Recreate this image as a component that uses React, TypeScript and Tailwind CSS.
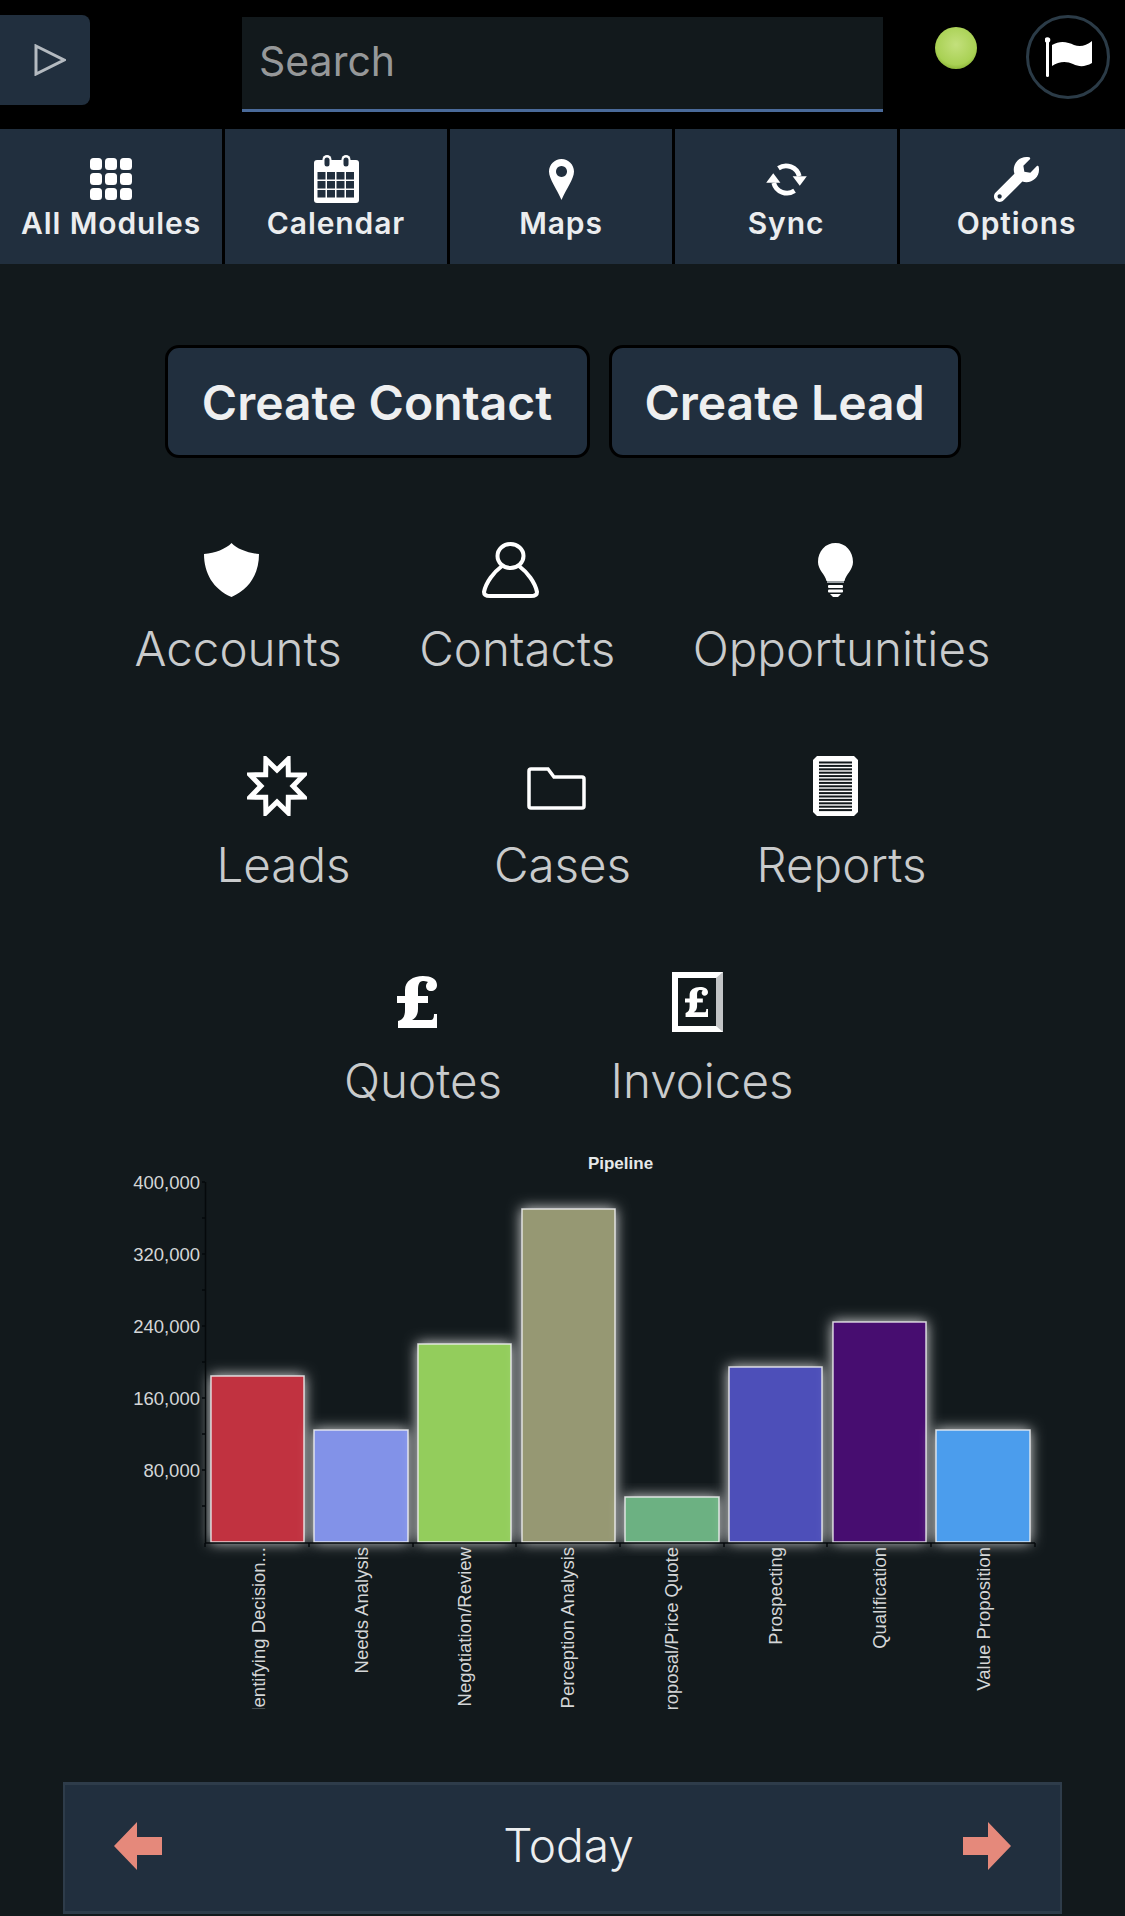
import React from 'react'
import { FaWrench } from 'react-icons/fa'

const bars = [
  { x: 211, w: 93, top: 1376, fill: '#c1323f', label: 'Identifying Decision...', lx: 258 },
  { x: 314, w: 94, top: 1430, fill: '#8292e8', label: 'Needs Analysis', lx: 361 },
  { x: 418, w: 93, top: 1344, fill: '#93cd5b', label: 'Negotiation/Review', lx: 464 },
  { x: 522, w: 93, top: 1209, fill: '#969873', label: 'Perception Analysis', lx: 567 },
  { x: 625, w: 94, top: 1497, fill: '#6cb182', label: 'Proposal/Price Quote', lx: 671 },
  { x: 729, w: 93, top: 1367, fill: '#4d50b9', label: 'Prospecting', lx: 775 },
  { x: 833, w: 93, top: 1322, fill: '#470b70', label: 'Qualification', lx: 879 },
  { x: 936, w: 94, top: 1430, fill: '#4b9ded', label: 'Value Proposition', lx: 983 },
]

const yLabels = [
  { y: 1182, t: '400,000' },
  { y: 1254, t: '320,000' },
  { y: 1326, t: '240,000' },
  { y: 1398, t: '160,000' },
  { y: 1470, t: '80,000' },
]

const starPoints = Array.from({ length: 16 }, (_, i) => {
  const r = i % 2 === 0 ? 29 : 16
  const a = ((i * 22.5 + 22.5 - 90) * Math.PI) / 180
  return `${30 + r * Math.cos(a)},${30 + r * Math.sin(a)}`
}).join(' ')

function GridIcon() {
  const cells = [0, 15, 30]
  return (
    <svg width="42" height="42" viewBox="0 0 42 42" fill="#fff">
      {cells.map((y) => cells.map((x) => <rect key={`${x}-${y}`} x={x} y={y} width="12" height="12" rx="3.5" />))}
    </svg>
  )
}

function CalendarIcon() {
  return (
    <svg width="45" height="48" viewBox="0 0 45 48">
      <rect x="0" y="5" width="45" height="43" rx="3" fill="#fff" />
      {[3.5, 13, 22.5, 32].map((x) =>
        [17, 26, 35].map((y) => <rect key={`${x}-${y}`} x={x} y={y} width="8" height="7.500" fill="#212f3e" />)
      )}
      {[13, 32].map((x) => (
        <g key={x}>
          <rect x={x - 4.5} y="0" width="9" height="14" rx="4.5" fill="#fff" />
          <rect x={x - 2.5} y="2.500" width="5" height="9" rx="2.500" fill="#212f3e" />
        </g>
      ))}
    </svg>
  )
}

function PinIcon() {
  return (
    <svg width="25" height="41" viewBox="0 0 25 41" fill="#fff" fillRule="evenodd">
      <path d="M12.5 0C19.4 0 25 5.6 25 12.5C25 20 17 30 12.5 41C8 30 0 20 0 12.5C0 5.6 5.6 0 12.5 0ZM12.5 7a5.5 5.5 0 1 0 .01 0Z" />
    </svg>
  )
}

function SyncIcon() {
  return (
    <svg width="41" height="35" viewBox="0 0 43 37" fill="none" stroke="#fff" strokeWidth="5">
      <path d="M13 6.5A14.5 14.5 0 0 1 35 15" />
      <path d="M30 30.5A14.5 14.5 0 0 1 8 22" />
      <path d="M28 15L43 15L35.5 25Z" fill="#fff" stroke="none" />
      <path d="M0 22L15 22L7.5 12Z" fill="#fff" stroke="none" />
    </svg>
  )
}

function ShieldIcon() {
  return (
    <svg width="55" height="54" viewBox="0 0 55 54" fill="#fff">
      <path d="M27.5 0C33 6 44 10 55 11C55 30 46 46 27.5 54C9 46 0 30 0 11C11 10 22 6 27.5 0Z" />
    </svg>
  )
}

function PersonIcon() {
  return (
    <svg width="57" height="56" viewBox="0 0 57 56" fill="none" stroke="#fff" strokeWidth="4">
      <ellipse cx="28.5" cy="14" rx="13" ry="12" />
      <path d="M20 24C12 30 4 40 2 50C2 53 5 54 8 54L49 54C52 54 55 53 55 50C53 40 45 30 37 24" />
    </svg>
  )
}

function BulbIcon() {
  return (
    <svg width="35" height="54" viewBox="0 0 35 54" fill="#fff">
      <path d="M17.5 0C27.5 0 35 8 35 19C35 27 28 31 26.5 38L8.5 38C7 31 0 27 0 19C0 8 7.5 0 17.5 0Z" />
      <rect x="9" y="38" width="17" height="2" fill="#9aa0a4" />
      <rect x="10" y="42" width="15" height="3" rx="1" />
      <rect x="10" y="46.500" width="15" height="3" rx="1" />
      <path d="M12 51L23 51L20 54L15 54Z" />
    </svg>
  )
}

function StarIcon() {
  return (
    <svg width="60" height="60" viewBox="0 0 60 60" fill="none" stroke="#fff" strokeWidth="5">
      <polygon points={starPoints} />
    </svg>
  )
}

function FolderIcon() {
  return (
    <svg className="mt-[4px]" width="59" height="43" viewBox="0 0 59 43" fill="none" stroke="#fff" strokeWidth="3.500">
      <path d="M2 4Q2 2 4 2L21 2L27 10L55 10Q57 10 57 12L57 39Q57 41 55 41L4 41Q2 41 2 39Z" />
    </svg>
  )
}

function ReportIcon() {
  const lines = Array.from({ length: 15 }, (_, i) => 5.5 + i * 3.4)
  return (
    <svg width="45" height="60" viewBox="0 0 45 60">
      <path d="M4 0L41 0L45 4L45 56L41 60L4 60L0 56L0 4Z" fill="#fff" />
      {lines.map((y) => <rect key={y} x="6" y={y} width="33" height="2" fill="#12191c" />)}
    </svg>
  )
}

function PoundIcon({ width, height }: { width: number; height: number }) {
  return (
    <svg width={width} height={height} viewBox="0 0 40 52" fill="#fff">
      <path d="M26 0C34 0 40 3 40 9C40 13 37 15 34 15C31 15 29 13 29 10C29 8 30 7 31 6C29 5 27 5 26 5C22 5 21 9 21 14L21 20L31 20L31 27L21 27L21 33C21 38 19 42 15 44L34 44C36 44 37 42 37 38L40 38L40 52L1 52L1 45C6 44 8 40 8 34L8 27L0 27L0 20L8 20L8 14C8 5 16 0 26 0Z" />
    </svg>
  )
}

function InvoiceIcon() {
  return (
    <div className="ml-[3px] flex h-[60px] w-[51px] items-center justify-center border-[6px] border-r-[7px] border-white border-r-[#c2c4c6]">
      <PoundIcon width={23} height={30} />
    </div>
  )
}

function NavItem({ icon, label, wide }: { icon: React.ReactNode; label: string; wide?: boolean }) {
  return (
    <div className={`flex h-full flex-col items-center bg-[#212f3e] ${wide ? 'flex-1 pl-[8px]' : 'w-[222px]'}`}>
      <div className="flex h-[76px] items-center justify-center pt-[24px]">{icon}</div>
      <span className="text-[30px] leading-[36px] font-semibold tracking-[0.9px] text-[#ebedef]">{label}</span>
    </div>
  )
}

function Tile({ icon, label }: { icon: React.ReactNode; label: string }) {
  return (
    <div className="min-w-[279px] px-[36px] text-center">
      <div className="flex h-[60px] items-center justify-center pr-[13px]">{icon}</div>
      <div className="mt-[22px] text-[47.5px] leading-[54px] font-light text-[#c9cbcc]">{label}</div>
    </div>
  )
}

function Chart() {
  return (
    <svg className="block" width="1125" height="620" viewBox="0 1140 1125 620" fontFamily="'Liberation Sans', Arial, sans-serif">
      <defs>
        <filter id="glow" x="-30%" y="-30%" width="160%" height="160%">
          <feDropShadow dx="0" dy="0" stdDeviation="7" floodColor="#fff" floodOpacity="0.85" />
        </filter>
        <clipPath id="labels">
          <rect x="200" y="1545" width="850" height="164" />
        </clipPath>
      </defs>
      <text x="620.500" y="1169" textAnchor="middle" fontSize="17" fontWeight="700" fill="#e6e8e9">Pipeline</text>
      {bars.map((b) => (
        <rect key={b.x} x={b.x} y={b.top} width={b.w} height={1542 - b.top} fill={b.fill} stroke="#eef0f1" strokeOpacity="0.85" strokeWidth="1.500" filter="url(#glow)" />
      ))}
      <g stroke="#05090b" strokeWidth="1.500">
        <line x1="205.500" y1="1182" x2="205.500" y2="1543" />
        <line x1="205" y1="1543" x2="1035" y2="1543" />
        {[1182, 1218, 1254, 1290, 1326, 1362, 1398, 1434, 1470, 1506].map((y) => <line key={y} x1="202" y1={y} x2="205" y2={y} />)}
        {[205, 309, 413, 516, 620, 724, 827, 931, 1035].map((x) => <line key={x} x1={x} y1="1543" x2={x} y2="1547" />)}
      </g>
      {yLabels.map((l) => (
        <text key={l.t} x="200" y={l.y + 6.500} textAnchor="end" fontSize="18.500" fill="#d4d6d7">{l.t}</text>
      ))}
      <g clipPath="url(#labels)">
        {bars.map((b) => (
          <text key={b.label} transform={`translate(${b.lx + 6.500} 1547) rotate(-90)`} textAnchor="end" fontSize="18.500" fill="#d4d6d7">{b.label}</text>
        ))}
      </g>
    </svg>
  )
}

export default function App() {
  return (
    <div className="h-[1916px] overflow-hidden bg-[#12191c] font-['Inter',sans-serif]">
      {/* top bar */}
      <div className="flex h-[129px] items-start bg-black">
        <button className="mt-[15px] flex h-[90px] w-[90px] items-center rounded-r-lg bg-[#212f3e] pl-[34px]">
          <svg width="32" height="32" viewBox="0 0 32 32" fill="none" stroke="#b4bac0" strokeWidth="3">
            <path d="M2 2L30 16L2 30Z" />
          </svg>
        </button>
        <div className="mt-[17px] ml-[152px] flex h-[95px] w-[641px] items-center border-b-[3px] border-[#4a6a9a] bg-[#12191c] pb-[2px] pl-[17px] text-[41px] text-[#969899]">
          Search
        </div>
        <div className="mt-[27px] ml-[52px] h-[42px] w-[42px] rounded-full bg-[radial-gradient(circle_at_50%_42%,#c3e07c_0%,#a9d154_62%,#7fa82a_85%,#55761a_100%)] blur-[0.5px]" />
        <div className="mt-[15px] ml-[49px] flex h-[84px] w-[84px] items-center justify-center rounded-full border-[3px] border-[#2b3b47]">
          <svg width="47" height="40" viewBox="0 0 47 40" fill="#fff">
            <circle cx="2.500" cy="3" r="2.800" />
            <rect x="1" y="3" width="3" height="37" rx="1.500" />
            <path d="M7 8C15 3 23 5 29 8C35 10 41 9 47 4L47 26C40 30 34 30 28 27C22 24 14 24 7 29Z" />
          </svg>
        </div>
      </div>

      {/* module nav */}
      <div className="flex h-[135px] gap-[3px] bg-black">
        <NavItem icon={<GridIcon />} label="All Modules" />
        <NavItem icon={<CalendarIcon />} label="Calendar" />
        <NavItem icon={<PinIcon />} label="Maps" />
        <NavItem icon={<SyncIcon />} label="Sync" />
        <NavItem icon={<FaWrench size={45} color="#fff" />} label="Options" wide />
      </div>

      <div className="mt-[81px] flex justify-center gap-[19px]">
        <button className="h-[113px] w-[425px] rounded-[14px] border-[3px] border-black bg-[#212f3e] pt-[2px] text-[48px] font-semibold text-[#eeeff0]">Create Contact</button>
        <button className="h-[113px] w-[352px] rounded-[14px] border-[3px] border-black bg-[#212f3e] pt-[2px] text-[48px] font-semibold text-[#eeeff0]">Create Lead</button>
      </div>

      <div className="mt-[82px] flex flex-col gap-[76px]">
        <div className="flex h-[140px] justify-center">
          <Tile icon={<ShieldIcon />} label="Accounts" />
          <Tile icon={<PersonIcon />} label="Contacts" />
          <Tile icon={<BulbIcon />} label="Opportunities" />
        </div>
        <div className="flex h-[140px] justify-center">
          <Tile icon={<StarIcon />} label="Leads" />
          <Tile icon={<FolderIcon />} label="Cases" />
          <Tile icon={<ReportIcon />} label="Reports" />
        </div>
        <div className="flex h-[140px] justify-center">
          <Tile icon={<PoundIcon width={40} height={52} />} label="Quotes" />
          <Tile icon={<InvoiceIcon />} label="Invoices" />
        </div>
      </div>

      <div className="mt-[28px]">
        <Chart />
      </div>

      {/* day switcher */}
      <div className="mx-[63px] mt-[22px] flex h-[132px] items-center justify-between border-x-2 border-t-[3px] border-b-[3px] border-[#2e3c4a] bg-[#212f3e] px-[49px] pb-[5px]">
        <svg width="48" height="48" viewBox="0 0 48 48" fill="#e5897b">
          <path d="M23 0L23 15L48 15L48 33L23 33L23 48L0 24Z" />
        </svg>
        <span className="pl-[12px] text-[46px] font-light text-[#eceeef]">Today</span>
        <svg width="48" height="48" viewBox="0 0 48 48" fill="#e5897b">
          <path d="M25 0L25 15L0 15L0 33L25 33L25 48L48 24Z" />
        </svg>
      </div>
    </div>
  )
}
